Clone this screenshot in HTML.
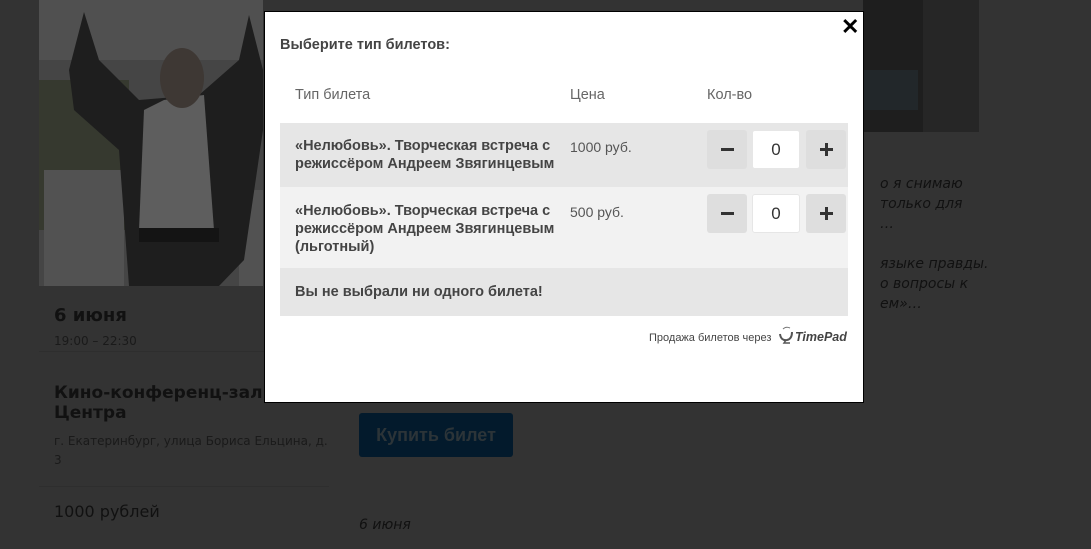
<!DOCTYPE html>
<html><head><meta charset="utf-8"><style>
*{margin:0;padding:0;box-sizing:border-box}
body{width:1091px;height:549px;background:#333;position:relative;overflow:hidden;font-family:"Liberation Sans",sans-serif}
.a{position:absolute}
.dt{color:#111;font-family:"DejaVu Sans","Liberation Sans",sans-serif}
.modal{left:264px;top:11px;width:600px;height:392px;background:#fff;border:1px solid #000}
.m{color:#444}
.row{position:absolute;left:15px;width:568px}
.bn{position:absolute;width:40px;height:39px;background:#dedede;border-radius:3px}
.bn i{position:absolute;left:14px;top:18px;width:13px;height:3px;background:#333}
.bn b{position:absolute;left:19px;top:13px;width:3px;height:13px;background:#333}
.inp{position:absolute;width:48px;height:39px;background:#fff;border:1px solid #e6e6e6;border-radius:3px;text-align:center;line-height:38px;font-size:17px;color:#333}
.nm{position:absolute;left:15px;font-size:14.5px;font-weight:bold;color:#444;line-height:18px}
.pr{position:absolute;left:290px;font-size:14px;color:#555}
</style></head><body>
<svg class="a" style="left:39px;top:0" width="224" height="286">
<rect width="224" height="286" fill="#454545"/>
<rect x="0" y="0" width="224" height="60" fill="#505050"/>
<rect x="0" y="80" width="90" height="150" fill="#36392f"/>
<rect x="5" y="170" width="80" height="116" fill="#525252"/>
<rect x="200" y="190" width="24" height="96" fill="#525252"/>
<path d="M30 70 L45 12 L60 60 L100 100 L160 95 L200 60 L210 15 L224 70 L224 130 L205 260 L180 286 L90 286 L80 150 L35 110 Z" fill="#1e1e1e"/>
<path d="M125 100 L165 95 L175 230 L100 230 L105 110 Z" fill="#5e5e5e"/>
<ellipse cx="143" cy="78" rx="22" ry="30" fill="#3e3834"/>
<rect x="100" y="228" width="80" height="14" fill="#141414"/>
</svg>
<svg class="a" style="left:863px;top:0" width="116" height="132">
<rect width="116" height="132" fill="#1e1e1e"/>
<rect x="60" width="56" height="132" fill="#262626"/>
<rect x="0" y="70" width="55" height="40" fill="#22272a"/>
</svg>
<div class="a dt" style="left:54px;top:305px;font-size:18px;font-weight:bold;color:#111">6 июня</div>
<div class="a dt" style="left:54px;top:334px;font-size:12px;color:#1a1a1a">19:00 – 22:30</div>
<div class="a" style="left:39px;top:351px;width:290px;height:1px;background:#2e2e2e"></div>
<div class="a dt" style="left:54px;top:383px;font-size:17px;font-weight:bold;line-height:20px">Кино-конференц-зал Ельцин<br>Центра</div>
<div class="a dt" style="left:54px;top:432px;font-size:12px;line-height:19px;color:#1a1a1a">г. Екатеринбург, улица Бориса Ельцина, д.<br>3</div>
<div class="a" style="left:39px;top:486px;width:290px;height:1px;background:#2e2e2e"></div>
<div class="a dt" style="left:54px;top:502px;font-size:16px">1000 рублей</div>
<div class="a dt" style="left:880px;top:174px;font-size:14px;font-style:italic;line-height:20px;color:#111">о я снимаю<br>только для<br>…<br><br>языке правды.<br>о вопросы к<br>ем»…</div>
<div class="a" style="left:359px;top:413px;width:154px;height:44px;background:#031a2c;border-radius:3px;color:#2c3438;font-weight:bold;font-size:18px;text-align:center;line-height:44px">Купить билет</div>
<div class="a dt" style="left:359px;top:517px;font-size:14px;font-style:italic">6 июня</div>

<div class="a modal">
<div class="a" style="left:576px;top:2px;font-size:22px;font-weight:bold;color:#000">✕</div>
<div class="a m" style="left:15px;top:25px;font-size:14.5px;font-weight:bold">Выберите тип билетов:</div>
<div class="a" style="left:30px;top:75px;font-size:14.5px;color:#666">Тип билета</div>
<div class="a" style="left:305px;top:75px;font-size:14.5px;color:#666">Цена</div>
<div class="a" style="left:442px;top:75px;font-size:14.5px;color:#666">Кол-во</div>
<div class="row" style="top:111px;height:64px;background:#e6e6e6">
 <div class="nm" style="top:14px">«Нелюбовь». Творческая встреча с<br>режиссёром Андреем Звягинцевым</div>
 <div class="pr" style="top:16px">1000 руб.</div>
 <div class="bn" style="left:427px;top:7px"><i></i></div><div class="inp" style="left:472px;top:7px">0</div><div class="bn" style="left:526px;top:7px"><i></i><b></b></div>
</div>
<div class="row" style="top:175px;height:81px;background:#f2f2f2">
 <div class="nm" style="top:15px">«Нелюбовь». Творческая встреча с<br>режиссёром Андреем Звягинцевым<br>(льготный)</div>
 <div class="pr" style="top:17px">500 руб.</div>
 <div class="bn" style="left:427px;top:7px"><i></i></div><div class="inp" style="left:472px;top:7px">0</div><div class="bn" style="left:526px;top:7px"><i></i><b></b></div>
</div>
<div class="row" style="top:256px;height:48px;background:#e6e6e6">
 <div class="nm" style="top:15px">Вы не выбрали ни одного билета!</div>
</div>
<div class="a" style="left:384px;top:320px;font-size:11px;color:#444">Продажа билетов через</div>
<svg class="a" style="left:512px;top:314px" width="18" height="18"><path d="M3 8 Q4 15 10 14 Q15 13 15 6" stroke="#555" stroke-width="2" fill="none"/><path d="M9 14 L7 17 L13 17" stroke="#555" stroke-width="1.5" fill="none"/><path d="M6 3 Q9 0 13 2" stroke="#777" stroke-width="1" fill="none"/></svg>
<div class="a" style="left:530px;top:318px;font-size:12.5px;font-style:italic;font-weight:bold;color:#444">TimePad</div>
</div>
</body></html>
